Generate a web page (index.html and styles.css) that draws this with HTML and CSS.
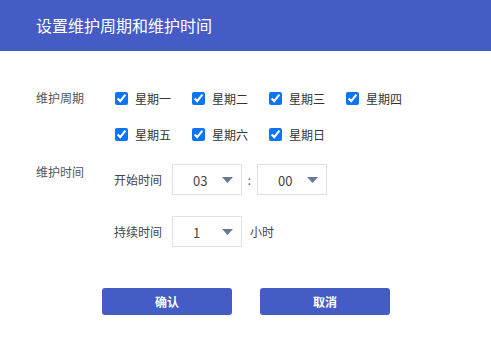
FILE: index.html
```html
<!DOCTYPE html>
<html lang="zh-CN">
<head>
    <meta charset="UTF-8">
    <meta name="viewport" content="width=device-width, initial-scale=1.0">
    <link rel="stylesheet" href="styles.css">
</head>
<body>
    <div class="dialog">
        <div class="dialog-header">设置维护周期和维护时间</div>

        <div class="dialog-body">
            <div class="form-row">
                <div class="form-label">维护周期</div>
                <div class="week-grid">
                    <label class="week-item"><input type="checkbox" checked><span>星期一</span></label>
                    <label class="week-item"><input type="checkbox" checked><span>星期二</span></label>
                    <label class="week-item"><input type="checkbox" checked><span>星期三</span></label>
                    <label class="week-item"><input type="checkbox" checked><span>星期四</span></label>
                    <label class="week-item"><input type="checkbox" checked><span>星期五</span></label>
                    <label class="week-item"><input type="checkbox" checked><span>星期六</span></label>
                    <label class="week-item"><input type="checkbox" checked><span>星期日</span></label>
                </div>
            </div>

            <div class="form-row time-row">
                <div class="form-label">维护时间</div>
                <div class="time-fields">
                    <div class="field">
                        <span class="field-label">开始时间</span>
                        <div class="select">
                            <span>03</span>
                            <svg class="arrow" width="11" height="6" viewBox="0 0 11 6"><path d="M0 0H11L5.5 6Z"/></svg>
                        </div>
                        <span class="colon">:</span>
                        <div class="select">
                            <span>00</span>
                            <svg class="arrow" width="11" height="6" viewBox="0 0 11 6"><path d="M0 0H11L5.5 6Z"/></svg>
                        </div>
                    </div>
                    <div class="field">
                        <span class="field-label">持续时间</span>
                        <div class="select">
                            <span>1</span>
                            <svg class="arrow" width="11" height="6" viewBox="0 0 11 6"><path d="M0 0H11L5.5 6Z"/></svg>
                        </div>
                        <span class="unit">小时</span>
                    </div>
                </div>
            </div>

            <div class="actions">
                <button class="btn">确认</button>
                <button class="btn">取消</button>
            </div>
        </div>
    </div>
</body>
</html>
```

FILE: styles.css
```css
body {
    margin: 0;
    padding: 0;
    background-color: #fff;
    font-family: "Noto Sans CJK SC", "Noto Sans", sans-serif;
    color: #333;
}

.dialog {
    width: 491px;
    height: 343px;
}

.dialog-header {
    height: 51px;
    line-height: 51px;
    padding-left: 36px;
    background-color: #455cc6;
    color: #fff;
    font-size: 16px;
}

.dialog-body {
    padding: 35px 0 0 36px;
}

.form-row {
    display: flex;
    align-items: flex-start;
}

.form-label {
    width: 78px;
    font-size: 12px;
    line-height: 24px;
    color: #555;
    flex-shrink: 0;
}

.week-grid {
    display: grid;
    grid-template-columns: repeat(4, 77px);
    row-gap: 12px;
}

.week-item {
    display: flex;
    align-items: center;
    height: 24px;
    font-size: 12px;
    color: #333;
}

.week-item input {
    width: 13px;
    height: 13px;
    margin: 0 7px 0 1px;
    accent-color: #0b75f5;
}

.time-row {
    margin-top: 18px;
}

.time-row .form-label {
    line-height: 16px;
}

.time-fields {
    display: flex;
    flex-direction: column;
    gap: 21px;
}

.field {
    display: flex;
    align-items: center;
    font-size: 12px;
}

.field-label {
    width: 58px;
    color: #444;
}

.select {
    width: 70px;
    height: 31px;
    box-sizing: border-box;
    border: 1px solid #dde1ea;
    display: flex;
    align-items: center;
    justify-content: space-between;
    padding: 0 8px 0 20px;
    font-size: 13px;
    color: #444;
}

.select span {
    padding-top: 2px;
}

.arrow {
    fill: #6c7893;
}

.colon {
    width: 15px;
    text-align: center;
    color: #555;
}

.unit {
    margin-left: 8px;
    color: #444;
}

.actions {
    display: flex;
    gap: 28px;
    margin: 41px 0 0 66px;
}

.btn {
    width: 130px;
    height: 27px;
    border: none;
    border-radius: 3px;
    background-color: #455cc6;
    color: #fff;
    font-family: inherit;
    font-size: 12px;
    font-weight: bold;
    padding: 0;
}
```
